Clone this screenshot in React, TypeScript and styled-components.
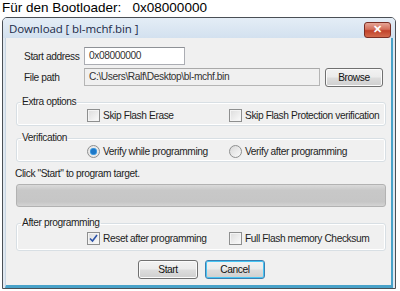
import React, { ReactElement } from "react"
import styled, { createGlobalStyle } from "styled-components"

const GlobalStyle = createGlobalStyle`
  html, body {
    margin: 0;
    padding: 0;
    background: #ffffff;
  }
  body {
    font-family: "Liberation Sans", Arial, sans-serif;
  }
`

const Caption = styled.div`
  height: 17px;
  padding-left: 2px;
  font-size: 13.5px;
  line-height: 16px;
  color: #000;
  white-space: pre;
`

// Window = Title bar + Body, with the aero-ish frame
const Window = styled.div`
  margin-left: 2px;
  width: 394px;
  height: 272px;
  box-sizing: border-box;
  border: 1px solid #4a4f55;
  border-radius: 5px 5px 0 0;
  background: #dfe8f1;
  display: flex;
  flex-direction: column;
  overflow: hidden;
`

const TitleBar = styled.div`
  height: 20px;
  flex: none;
  display: flex;
  align-items: center;
  justify-content: space-between;
  padding: 0 4px 0 6px;
  background: linear-gradient(#e4edf6, #d3e1ef);
`

const Title = styled.span`
  font-family: "Open Sans", "Noto Sans", sans-serif;
  font-size: 11.5px;
  color: #1b2a48;
  letter-spacing: -0.1px;
`

const CloseButton = styled.div`
  width: 25px;
  height: 14px;
  margin-top: 3px;
  border: 1px solid #7a2e24;
  border-radius: 3px;
  background: linear-gradient(#e6a596 0%, #d3705b 45%, #c1422a 55%, #d26a4c 100%);
  display: grid;
  place-items: center;
  color: #fff;
  font-size: 11px;
  font-weight: bold;
  line-height: 1;
`

const Body = styled.div`
  flex: 1;
  background: #f0f0f0;
  margin: 0 2px 0 2px;
  border-right: 2px solid #49a2c9;
  border-bottom: 3px solid #49a2c9;
  border-left: 1px solid #c9d6e3;
  padding: 9px 5px 0 10px;
  display: flex;
  flex-direction: column;
  font-size: 10.2px;
  letter-spacing: -0.4px;
  color: #1e1e1e;
`

const FieldRow = styled.div`
  display: flex;
  align-items: center;
  height: 18px;
  margin-left: 8px;
  margin-bottom: 3px;
`

const FieldLabel = styled.span`
  width: 60px;
  flex: none;
  white-space: nowrap;
`

const TextBox = styled.div<{ $width: number; $disabled?: boolean }>`
  width: ${(p) => p.$width}px;
  height: 18px;
  box-sizing: border-box;
  border: 1px solid ${(p) => (p.$disabled ? "#b5b5b5" : "#abadb3")};
  border-top-color: ${(p) => (p.$disabled ? "#a9a9a9" : "#8e9196")};
  background: ${(p) => (p.$disabled ? "#f0f0f0" : "#ffffff")};
  padding: 0 4px;
  line-height: 16px;
  color: #333;
  white-space: nowrap;
  overflow: hidden;
`

const Button = styled.div<{ $focused?: boolean; $width: number }>`
  width: ${(p) => p.$width}px;
  height: 19px;
  flex: none;
  box-sizing: border-box;
  border: 1px solid ${(p) => (p.$focused ? "#3c7fb1" : "#707070")};
  box-shadow: ${(p) => (p.$focused ? "inset 0 0 0 1px #48c5f4" : "inset 0 0 0 1px #fbfbfb")};
  border-radius: 3px;
  background: linear-gradient(#f2f2f2 0%, #ebebeb 48%, #dddddd 52%, #cfcfcf 100%);
  display: grid;
  place-items: center;
  color: #111;
`

const Group = styled.fieldset<{ $top: number; $padTop?: number }>`
  margin: ${(p) => p.$top}px 0 0 0;
  padding: ${(p) => p.$padTop ?? 0}px 0 ${(p) => 3 + (p.$padTop ?? 0)}px 0;
  border: 1px solid #d8dfe4;
  border-radius: 3px;
  box-shadow: inset 0 0 0 1px #ffffff;
  min-width: 0;
`

const Legend = styled.legend`
  padding: 0 1px;
  margin-left: 4px;
  line-height: 12px;
  color: #1e1e1e;
`

const Options = styled.div`
  padding-left: 70px;
  display: grid;
  grid-template-columns: 142px 1fr;
  align-items: center;
`

const Option = styled.label`
  display: flex;
  align-items: center;
  gap: 3px;
  height: 14px;
  white-space: nowrap;
`

const CheckBox = styled.span`
  width: 11px;
  height: 11px;
  border: 1px solid #8e8f8f;
  background: linear-gradient(135deg, #dcdcdc, #fbfbfb);
  box-shadow: inset 0 0 0 1px #f4f4f4;
  display: grid;
  place-items: center;
`

const Radio = styled.span<{ $checked?: boolean }>`
  width: 11px;
  height: 11px;
  border: 1px solid #8e8f8f;
  border-radius: 50%;
  background: ${(p) =>
    p.$checked
      ? "radial-gradient(circle, #1d78c8 0 2.5px, #60b2ea 3.5px, #e8e8e8 4px)"
      : "linear-gradient(135deg, #d8d8d8, #fafafa)"};
`

const Status = styled.div`
  height: 16px;
  line-height: 16px;
  margin-top: 4px;
  margin-left: -1px;
`

const Progress = styled.div`
  height: 23px;
  margin-top: 2px;
  box-sizing: border-box;
  border: 1px solid #b2b2b2;
  border-radius: 3px;
  background: linear-gradient(#dadada, #c8c8c8 25%, #c6c6c6 80%, #d4d4d4);
`

const Spacer = styled.div<{ $width: number }>`
  width: ${(p) => p.$width}px;
  flex: none;
`

const ButtonRow = styled.div`
  display: flex;
  justify-content: center;
  gap: 7px;
  margin-top: 9px;
  padding-left: 1px;
`

const Check = (): ReactElement => (
  <svg width="9" height="9" viewBox="0 0 9 9">
    <path d="M1 4.5 L3.5 7 L8 1" fill="none" stroke="#2c53a8" strokeWidth="1.6" />
  </svg>
)

const CheckOption = ({ text, checked }: { text: string; checked?: boolean }): ReactElement => (
  <Option>
    <CheckBox>{checked && <Check />}</CheckBox>
    <span>{text}</span>
  </Option>
)

const RadioOption = ({ text, checked }: { text: string; checked?: boolean }): ReactElement => (
  <Option>
    <Radio $checked={checked} />
    <span>{text}</span>
  </Option>
)

const App = (): ReactElement => (
  <>
    <GlobalStyle />
    <Caption>{"Für den Bootloader:   0x08000000"}</Caption>
    <Window>
      <TitleBar>
        <Title>Download [ bl-mchf.bin ]</Title>
        <CloseButton>✕</CloseButton>
      </TitleBar>
      <Body>
        <FieldRow>
          <FieldLabel>Start address</FieldLabel>
          <TextBox $width={101}>0x08000000</TextBox>
        </FieldRow>
        <FieldRow>
          <FieldLabel>File path</FieldLabel>
          <TextBox $width={236} $disabled>C:\Users\Ralf\Desktop\bl-mchf.bin</TextBox>
          <Spacer $width={5} />
          <Button $width={58}>Browse</Button>
        </FieldRow>
        <Group $top={7}>
          <Legend>Extra options</Legend>
          <Options>
            <CheckOption text="Skip Flash Erase" />
            <CheckOption text="Skip Flash Protection verification" />
          </Options>
        </Group>
        <Group $top={6}>
          <Legend>Verification</Legend>
          <Options>
            <RadioOption text="Verify while programming" checked />
            <RadioOption text="Verify after programming" />
          </Options>
        </Group>
        <Status>Click "Start" to program target.</Status>
        <Progress />
        <Group $top={10} $padTop={2}>
          <Legend>After programming</Legend>
          <Options>
            <CheckOption text="Reset after programming" checked />
            <CheckOption text="Full Flash memory Checksum" />
          </Options>
        </Group>
        <ButtonRow>
          <Button $width={60}>Start</Button>
          <Button $width={60} $focused>
            Cancel
          </Button>
        </ButtonRow>
      </Body>
    </Window>
  </>
)

export default App
